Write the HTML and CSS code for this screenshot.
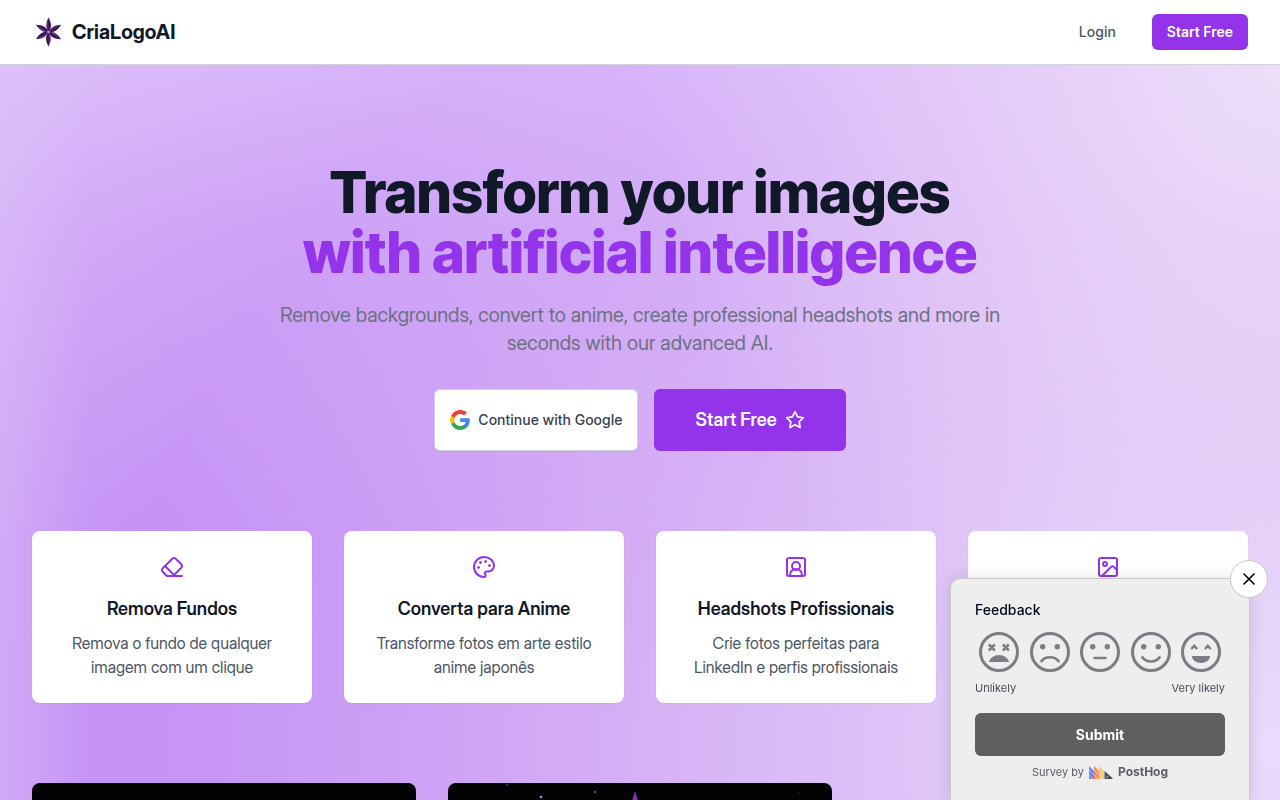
FILE: index.html
```html
<!DOCTYPE html>
<html lang="en">
<head>
<meta charset="utf-8">
<meta name="viewport" content="width=device-width, initial-scale=1">
<title>CriaLogoAI</title>
<link rel="stylesheet" href="styles.css">
</head>
<body>
<header class="navbar">
  <a class="brand" href="#">
    <svg class="brand-mark" viewBox="0 0 32 32" aria-hidden="true">
      <defs>
        <linearGradient id="petal" x1="0" x2="1" y1="0" y2="0">
          <stop offset="0" stop-color="#8a55a8"/>
          <stop offset=".4" stop-color="#4a1a6b"/>
          <stop offset="1" stop-color="#240a3d"/>
        </linearGradient>
        <path id="leaf" d="M16.500 16C13 11.500 13.600 7 16.500 1.500C19.400 7 20 11.500 16.500 16Z" fill="url(#petal)"/>
      </defs>
      <use href="#leaf"/>
      <use href="#leaf" transform="rotate(60 16.500 16)"/>
      <use href="#leaf" transform="rotate(120 16.500 16)"/>
      <use href="#leaf" transform="rotate(180 16.500 16)"/>
      <use href="#leaf" transform="rotate(240 16.500 16)"/>
      <use href="#leaf" transform="rotate(300 16.500 16)"/>
      <circle cx="16.500" cy="16" r="1.200" fill="#b9a3c6"/>
    </svg>
    <span>CriaLogoAI</span>
  </a>
  <nav class="nav-links">
    <a class="login" href="#">Login</a>
    <a class="nav-cta" href="#">Start Free</a>
  </nav>
</header>

<main class="page">
  <section class="hero">
    <h1 class="hero-title">Transform your images <span class="accent">with artificial intelligence</span></h1>
    <p class="hero-text">Remove backgrounds, convert to anime, create professional headshots and more in seconds with our advanced AI.</p>
    <div class="hero-actions">
      <button class="google" type="button">
        <svg width="20" height="20" viewBox="0 0 24 24" aria-hidden="true">
          <path fill="#4285F4" d="M23.745 12.270c0-.790-.070-1.540-.190-2.270h-11.300v4.510h6.470c-.290 1.480-1.140 2.730-2.400 3.580v3h3.860c2.260-2.090 3.560-5.170 3.560-8.820z"/>
          <path fill="#34A853" d="M12.255 24c3.240 0 5.950-1.080 7.930-2.910l-3.860-3c-1.080.720-2.450 1.160-4.070 1.160-3.130 0-5.780-2.110-6.730-4.960h-3.980v3.090C3.515 21.300 7.565 24 12.255 24z"/>
          <path fill="#FBBC05" d="M5.525 14.290c-.250-.720-.380-1.490-.380-2.290s.140-1.570.380-2.290V6.620h-3.980a11.860 11.860 0 0 0 0 10.760l3.980-3.090z"/>
          <path fill="#EA4335" d="M12.255 4.750c1.770 0 3.350.610 4.600 1.800l3.420-3.420C18.205 1.190 15.495 0 12.255 0c-4.690 0-8.740 2.700-10.710 6.620l3.980 3.090c.950-2.850 3.600-4.960 6.730-4.960z"/>
        </svg>
        Continue with Google
      </button>
      <a class="start" href="#">
        Start Free
        <svg width="20" height="20" viewBox="0 0 24 24" fill="none" stroke="currentColor" stroke-width="2" stroke-linecap="round" stroke-linejoin="round" aria-hidden="true"><path d="M12 2l3.090 6.260L22 9.270l-5 4.870 1.180 6.880L12 17.770l-6.180 3.250L7 14.140 2 9.270l6.910-1.010L12 2z"/></svg>
      </a>
    </div>
  </section>

  <section class="features">
    <article class="card">
      <svg class="card-icon" viewBox="0 0 24 24" aria-hidden="true"><path d="m7 21-4.300-4.300c-1-1-1-2.500 0-3.400l9.600-9.600c1-1 2.500-1 3.400 0l5.600 5.600c1 1 1 2.500 0 3.400L13 21"/><path d="M22 21H7"/><path d="m5 11 9 9"/></svg>
      <h3 class="card-title">Remova Fundos</h3>
      <p class="card-text">Remova o fundo de qualquer imagem com um clique</p>
    </article>
    <article class="card">
      <svg class="card-icon" viewBox="0 0 24 24" aria-hidden="true"><g fill="#9333ea" stroke-width="1"><circle cx="13.500" cy="6.500" r="1"/><circle cx="17.500" cy="10.500" r="1"/><circle cx="8.500" cy="7.500" r="1"/><circle cx="6.500" cy="12.500" r="1"/></g><path d="M12 2C6.500 2 2 6.500 2 12s4.500 10 10 10c.926 0 1.648-.746 1.648-1.688 0-.437-.180-.835-.437-1.125-.290-.289-.438-.652-.438-1.125a1.640 1.640 0 0 1 1.668-1.668h1.996c3.051 0 5.555-2.503 5.555-5.554C21.965 6.012 17.461 2 12 2z"/></svg>
      <h3 class="card-title">Converta para Anime</h3>
      <p class="card-text">Transforme fotos em arte estilo anime japonês</p>
    </article>
    <article class="card">
      <svg class="card-icon" viewBox="0 0 24 24" aria-hidden="true"><rect x="3" y="3" width="18" height="18" rx="2"/><circle cx="12" cy="11" r="4"/><path d="M6 21v-1a6 6 0 0 1 12 0v1"/></svg>
      <h3 class="card-title">Headshots Profissionais</h3>
      <p class="card-text">Crie fotos perfeitas para LinkedIn e perfis profissionais</p>
    </article>
    <article class="card">
      <svg class="card-icon" viewBox="0 0 24 24" aria-hidden="true"><rect x="3" y="3" width="18" height="18" rx="2"/><circle cx="9" cy="9" r="2"/><path d="m21 15-3.086-3.086a2 2 0 0 0-2.828 0L6 21"/></svg>
    </article>
  </section>

  <section class="gallery">
    <div class="shot"></div>
    <div class="shot">
      <svg class="stars" viewBox="0 0 384 200" aria-hidden="true">
        <circle cx="59" cy="2" r="1" fill="#4b2590"/>
        <circle cx="93" cy="14" r="1.300" fill="#a88be0"/>
        <circle cx="147" cy="9" r="1.200" fill="#6a35b0"/>
        <circle cx="351" cy="10" r=".8" fill="#33204d"/>
        <path d="M187 8L193 28H181Z" fill="#7c35b5"/>
      </svg>
    </div>
  </section>
</main>

<form class="survey">
  <button class="survey-close" type="button" aria-label="Close">
    <svg width="12" height="12" viewBox="0 0 12 12" fill="none" stroke="#000" stroke-width="1.600" stroke-linecap="round" aria-hidden="true"><path d="M1 1l10 10M11 1L1 11"/></svg>
  </button>
  <h2 class="survey-title">Feedback</h2>
  <div class="faces">
    <button class="face" type="button" aria-label="1"><svg viewBox="0 0 40 40"><circle class="line" cx="20" cy="20" r="18.500"/><path class="line thin" d="M9.800 12.500l6 6M15.800 12.500l-6 6M23.800 12.500l6 6M29.800 12.500l-6 6"/><path class="solid" d="M10 30c1-4 5-7 10-7s9 3 10 7z"/></svg></button>
    <button class="face" type="button" aria-label="2"><svg viewBox="0 0 40 40"><circle class="line" cx="20" cy="20" r="18.500"/><circle class="solid" cx="12.700" cy="14.700" r="2.700"/><circle class="solid" cx="27.300" cy="14.700" r="2.700"/><path class="line thin" d="M10.800 30c4-6.500 14.400-6.500 18.400 0"/></svg></button>
    <button class="face" type="button" aria-label="3"><svg viewBox="0 0 40 40"><circle class="line" cx="20" cy="20" r="18.500"/><circle class="solid" cx="12.700" cy="14.700" r="2.700"/><circle class="solid" cx="27.300" cy="14.700" r="2.700"/><path class="line thin" d="M13.500 26h13"/></svg></button>
    <button class="face" type="button" aria-label="4"><svg viewBox="0 0 40 40"><circle class="line" cx="20" cy="20" r="18.500"/><circle class="solid" cx="12.700" cy="14.700" r="2.700"/><circle class="solid" cx="27.300" cy="14.700" r="2.700"/><path class="line thin" d="M10.800 24.500c4 6.500 14.400 6.500 18.400 0"/></svg></button>
    <button class="face" type="button" aria-label="5"><svg viewBox="0 0 40 40"><circle class="line" cx="20" cy="20" r="18.500"/><path class="line thin" d="M10.200 17l3-3.200 3 3.200M23.800 17l3-3.200 3 3.200"/><path class="solid" d="M11 24h18c0 4-4 7-9 7s-9-3-9-7z"/></svg></button>
  </div>
  <div class="scale"><span>Unlikely</span><span>Very likely</span></div>
  <button class="submit" type="submit">Submit</button>
  <a class="credit" href="#">
    Survey by
    <svg width="24" height="13" viewBox="0 0 24 13" aria-hidden="true">
      <path fill="#6c86ee" d="M0 0l5 5v8H0z"/>
      <path fill="#f58f55" d="M5 0l5 5v8H5z"/>
      <path fill="#f6cb78" d="M10 0l5 5v8h-5z"/>
      <path stroke="#eee" stroke-width=".5" d="M0 4l9 9M0 9l4 4M5 4l9 9M10 4l5 5"/>
      <path fill="#4f525c" d="M15.500 5l8 7v1h-8z"/>
      <circle cx="18" cy="11" r=".7" fill="#eee"/>
    </svg>
    <b>PostHog</b>
  </a>
</form>
</body>
</html>
```
FILE: styles.css
```css
* {
  box-sizing: border-box;
}

body {
  margin: 0;
  height: 100vh;
  display: flex;
  flex-direction: column;
  overflow: hidden;
  font-family: Inter, "Liberation Sans", sans-serif;
  font-size: 16px;
  line-height: 24px;
  color: #111827;
  background: #fff;
}

h1, h2, h3, p {
  margin: 0;
}

a {
  color: inherit;
  text-decoration: none;
}

button {
  font: inherit;
  cursor: pointer;
}

svg {
  display: block;
  flex: none;
}

.brand,
.hero-text,
.start,
.card {
  font-family: "Inter Display", Inter, "Liberation Sans", sans-serif;
}

.navbar {
  flex: none;
  display: flex;
  align-items: center;
  justify-content: space-between;
  height: 65px;
  padding: 0 32px;
  border-bottom: 1px solid #d1d5db;
  background: #fff;
}

.brand {
  display: flex;
  align-items: center;
  gap: 8px;
  font-size: 20px;
  line-height: 28px;
  font-weight: 700;
}

.brand-mark {
  width: 32px;
  height: 32px;
}

.nav-links {
  display: flex;
  align-items: center;
  gap: 36px;
  font-size: 14px;
  line-height: 20px;
  font-weight: 500;
}

.login {
  color: #4b5563;
}

.nav-cta {
  padding: 8px 15px;
  border-radius: 6px;
  background: #9333ea;
  color: #fff;
  font-weight: 600;
}

.page {
  flex: 1;
  min-height: 0;
  overflow: hidden;
  padding: 98px 32px 0;
  background:
    linear-gradient(90deg, rgba(222, 196, 249, .4), rgba(222, 196, 249, 0) 7%),
    radial-gradient(50% 90% at 100% 0, rgba(243, 234, 248, .75), rgba(240, 228, 250, 0)),
    linear-gradient(180deg, rgba(232, 208, 252, .5), rgba(226, 198, 250, .3) 22%, rgba(226, 198, 250, 0) 65%),
    radial-gradient(121% 170% at 100% 93%,
      #ebdbfb 0%, #dfc6f8 22%, #d5aff5 43%, #cc9ff5 58%,
      #c592f5 75%, #c899f5 83%, #cda2f6 91%, #d3aff8 100%);
}

.hero {
  display: flex;
  flex-direction: column;
  align-items: center;
  text-align: center;
}

.hero-title {
  font-family: "Inter Tight", Inter, "Liberation Sans", sans-serif;
  font-size: 57px;
  line-height: 60px;
  font-weight: 800;
}

.accent {
  display: block;
  color: #9333ea;
}

.hero-text {
  max-width: 768px;
  margin-top: 18px;
  font-size: 20px;
  line-height: 28px;
  color: #6b7280;
}

.hero-actions {
  display: flex;
  gap: 16px;
  margin-top: 32px;
}

.google,
.start {
  display: flex;
  align-items: center;
  gap: 8px;
  min-height: 62px;
  border-radius: 6px;
}

.google {
  padding: 0 15px;
  border: 1px solid #d1d5db;
  background: #fff;
  color: #374151;
  font-size: 14px;
  font-weight: 500;
  box-shadow: 0 1px 2px rgba(0, 0, 0, .05);
}

.start {
  padding: 0 41px;
  background: #9333ea;
  color: #fff;
  font-size: 18px;
  font-weight: 600;
}

.features {
  display: grid;
  grid-template-columns: repeat(4, 1fr);
  gap: 32px;
  margin-top: 80px;
}

.card {
  padding: 24px;
  border-radius: 8px;
  background: #fff;
  text-align: center;
  box-shadow: 0 1px 2px rgba(0, 0, 0, .05);
}

.card-icon {
  width: 24px;
  height: 24px;
  margin: 0 auto;
  fill: none;
  stroke: #9333ea;
  stroke-width: 2;
  stroke-linecap: round;
  stroke-linejoin: round;
}

.card-title {
  margin-top: 16px;
  font-size: 18px;
  line-height: 28px;
  font-weight: 600;
}

.card-text {
  margin-top: 8px;
  padding: 0 4px;
  color: #4b5563;
}

.gallery {
  display: grid;
  grid-template-columns: repeat(3, 1fr);
  gap: 32px;
  margin-top: 80px;
}

.shot {
  min-height: 200px;
  border-radius: 8px;
  background: #030304;
  overflow: hidden;
}

.stars {
  width: 100%;
}

.survey {
  position: fixed;
  right: 30px;
  bottom: 0;
  width: 300px;
  padding: 20px 24px;
  border: 1px solid #c9c6c6;
  border-width: 1px 1px 0;
  border-radius: 10px 10px 0 0;
  background: #eee;
  color: #020617;
  box-shadow: 0 0 16px rgba(0, 0, 0, .12);
}

.survey-close {
  position: absolute;
  top: -19px;
  right: -19px;
  display: flex;
  align-items: center;
  justify-content: center;
  width: 38px;
  height: 38px;
  padding: 0;
  border: 1px solid #c9c6c6;
  border-radius: 50%;
  background: #fff;
}

.survey-title {
  font-size: 14px;
  line-height: 22px;
  font-weight: 500;
}

.faces {
  display: flex;
  justify-content: space-between;
  margin-top: 11px;
  padding: 0 4px;
}

.face {
  width: 40px;
  height: 40px;
  padding: 0;
  border: 0;
  background: none;
}

.line {
  fill: none;
  stroke: #7c7c85;
  stroke-width: 3;
}

.thin {
  stroke-width: 2.5;
}

.solid {
  fill: #7c7c85;
}

.scale {
  display: flex;
  justify-content: space-between;
  margin-top: 8px;
  font-size: 11px;
  line-height: 16px;
  color: #4b4b58;
}

.submit {
  display: block;
  width: 100%;
  height: 43px;
  margin-top: 17px;
  border: 0;
  border-radius: 6px;
  background: #5f5f5f;
  color: #fff;
  font-size: 14px;
  font-weight: 700;
}

.credit {
  display: flex;
  align-items: center;
  justify-content: center;
  gap: 5px;
  margin-top: 8px;
  font-size: 11px;
  line-height: 16px;
  color: #5a5c66;
}

.credit b {
  font-size: 12px;
  font-weight: 700;
}
```
